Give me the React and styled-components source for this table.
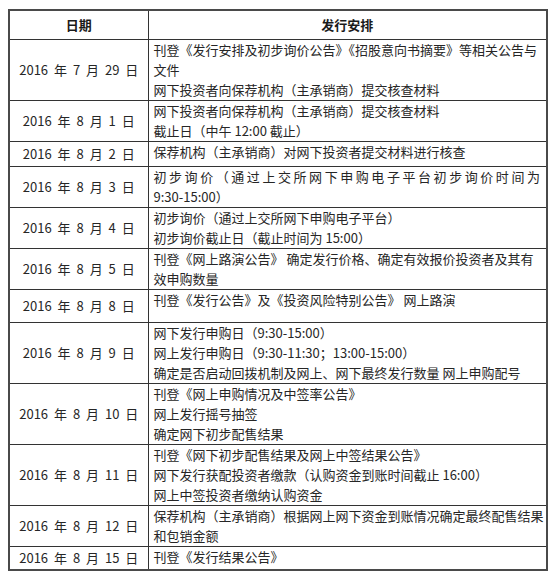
import React from 'react';
import styled, { createGlobalStyle } from 'styled-components';

const GlobalStyle = createGlobalStyle`
  html, body {
    margin: 0;
    padding: 0;
    background: #ffffff;
  }
  body {
    font-family: "Noto Sans CJK SC", "Liberation Sans", sans-serif;
    color: #222;
  }
`;

const schedule = [
  {
    date: ['7', '29'],
    h: 61,
    lines: [
      '刊登《发行安排及初步询价公告》《招股意向书摘要》等相关公告与',
      '文件',
      '网下投资者向保荐机构（主承销商）提交核查材料',
    ],
  },
  {
    date: ['8', '1'],
    h: 41,
    lines: ['网下投资者向保荐机构（主承销商）提交核查材料', '截止日（中午 12:00 截止）'],
  },
  { date: ['8', '2'], h: 25, lines: ['保荐机构（主承销商）对网下投资者提交材料进行核查'] },
  {
    date: ['8', '3'],
    h: 41,
    spreadFirst: true,
    lines: ['初步询价（通过上交所网下申购电子平台初步询价时间为', '9:30-15:00）'],
  },
  {
    date: ['8', '4'],
    h: 41,
    lines: ['初步询价（通过上交所网下申购电子平台）', '初步询价截止日（截止时间为 15:00）'],
  },
  {
    date: ['8', '5'],
    h: 41,
    lines: ['刊登《网上路演公告》 确定发行价格、确定有效报价投资者及其有', '效申购数量'],
  },
  { date: ['8', '8'], h: 33, lines: ['刊登《发行公告》及《投资风险特别公告》 网上路演'] },
  {
    date: ['8', '9'],
    h: 60,
    lines: [
      '网下发行申购日（9:30-15:00）',
      '网上发行申购日（9:30-11:30；13:00-15:00）',
      '确定是否启动回拨机制及网上、网下最终发行数量 网上申购配号',
    ],
  },
  {
    date: ['8', '10'],
    h: 61,
    lines: ['刊登《网上申购情况及中签率公告》', '网上发行摇号抽签', '确定网下初步配售结果'],
  },
  {
    date: ['8', '11'],
    h: 60,
    lines: [
      '刊登《网下初步配售结果及网上中签结果公告》',
      '网下发行获配投资者缴款（认购资金到账时间截止 16:00）',
      '网上中签投资者缴纳认购资金',
    ],
  },
  {
    date: ['8', '12'],
    h: 40,
    lines: ['保荐机构（主承销商）根据网上网下资金到账情况确定最终配售结果', '和包销金额'],
  },
  { date: ['8', '15'], h: 24, lines: ['刊登《发行结果公告》'] },
];

const App = () => {
  return (
    <Page>
      <GlobalStyle />
      <Table>
        <colgroup>
          <col style={{ width: 139 }} />
          <col />
        </colgroup>
        <thead>
          <HeadRow>
            <HeadCell>日期</HeadCell>
            <HeadCell>发行安排</HeadCell>
          </HeadRow>
        </thead>
        <tbody>
          {schedule.map((row, i) => (
            <Row key={i} $h={row.h}>
              <DateCell>
                2016 年 {row.date[0]} 月 {row.date[1]} 日
              </DateCell>
              <PlanCell>
                {row.lines.map((line, j) => (
                  <Line key={j} $spread={row.spreadFirst && j === 0}>
                    {line}
                  </Line>
                ))}
              </PlanCell>
            </Row>
          ))}
        </tbody>
      </Table>
    </Page>
  );
};

export default App;

// 스타일
const Page = styled.div`
  width: 560px;
  height: 576px;
  padding: 9px 0 0 8px;
  box-sizing: border-box;
`;

const Table = styled.table`
  width: 540px;
  border-collapse: collapse;
  table-layout: fixed;
  border: 2px solid #4a4a4a;
  font-size: 13px;
`;

const HeadRow = styled.tr`
  height: 29px;
`;

const HeadCell = styled.th`
  border: 1px solid #333;
  font-size: 13px;
  font-weight: 700;
  color: #1a1a1a;
  text-align: center;
  vertical-align: middle;
  padding: 0;
`;

const Row = styled.tr`
  height: ${(p) => p.$h}px;
`;

const DateCell = styled.td`
  border: 1px solid #333;
  text-align: center;
  vertical-align: middle;
  padding: 0;
  white-space: pre;
  word-spacing: 3px;
  color: #262626;
`;

const PlanCell = styled.td`
  border: 1px solid #333;
  vertical-align: top;
  padding: 0 6px 0 5px;
  color: #262626;
`;

const Line = styled.div`
  line-height: 20px;
  white-space: nowrap;
  text-align: ${(p) => (p.$spread ? 'justify' : 'left')};
  text-align-last: ${(p) => (p.$spread ? 'justify' : 'auto')};
`;
